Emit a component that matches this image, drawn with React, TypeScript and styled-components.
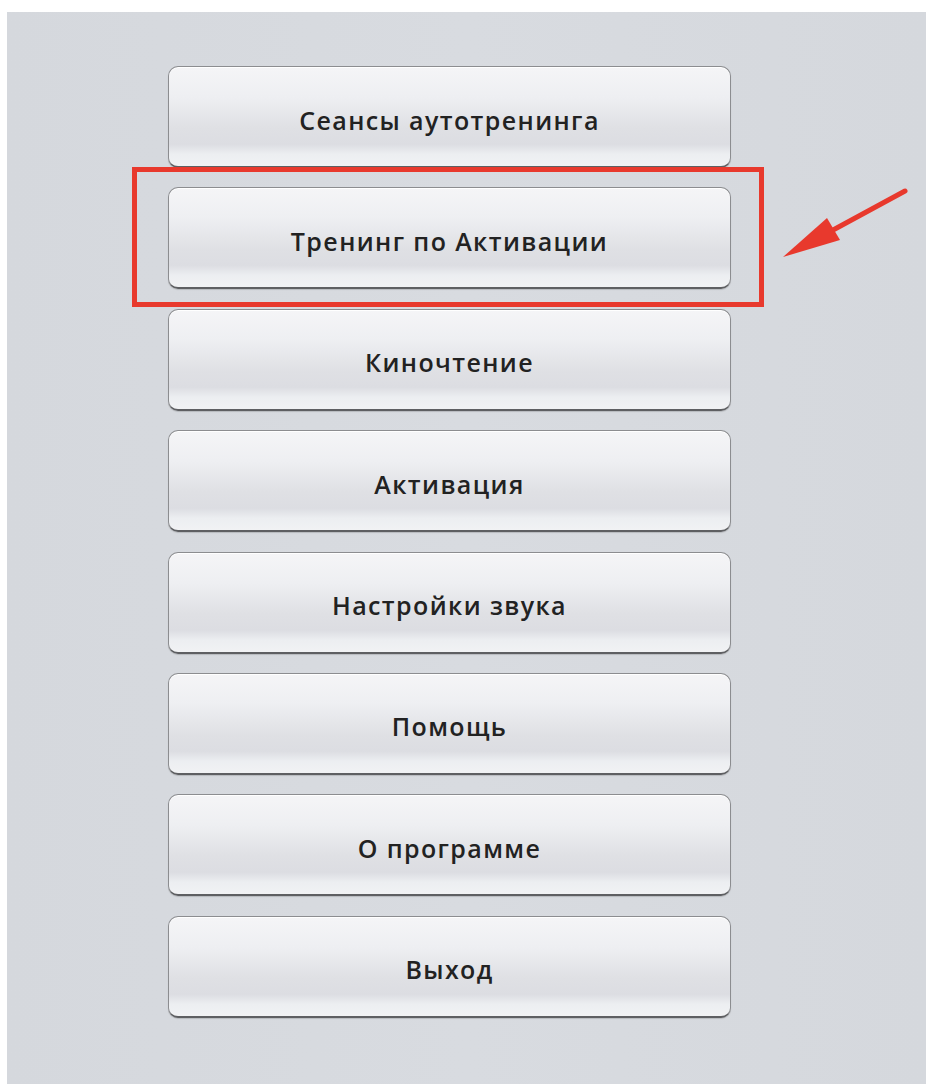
import React from 'react';
import styled, { createGlobalStyle } from 'styled-components';

const GlobalStyle = createGlobalStyle`
  html,
  body {
    margin: 0;
    padding: 0;
    background: #ffffff;
  }

  body {
    font-family: 'Open Sans', 'DejaVu Sans', sans-serif;
  }
`;

const StyledScreen = styled.main`
  position: relative;
  box-sizing: border-box;
  height: 1072px;
  margin: 12px 0 0 7px;
  padding: 54px 0 0 161px;
  background: linear-gradient(90deg, #d5d8dd 0%, #d8dbe0 50%, #d5d8dd 100%);
`;

const StyledMenu = styled.nav`
  display: flex;
  flex-direction: column;
  gap: 19.4px;
  width: 563px;
`;

const StyledItem = styled.div<{ $marked?: boolean }>`
  position: relative;

  ${({ $marked }) => $marked && `
    &::after {
      position: absolute;
      inset: -20px -33px -18px -36px;
      content: '';
      border: 5px solid #e8392d;
      pointer-events: none;
    }
  `}
`;

const StyledButton = styled.button`
  display: flex;
  align-items: center;
  justify-content: center;
  box-sizing: border-box;
  width: 100%;
  height: 102px;
  padding: 6px 0 0;
  border: 1px solid #8c8d90;
  border-bottom: 2px solid #5e5f62;
  border-radius: 10px;
  background: linear-gradient(
    180deg,
    #f5f5f7 0%,
    #eeeff2 30%,
    #dfe0e4 62%,
    #dcdde2 78%,
    #eceef1 88%,
    #f1f2f4 100%
  );
  box-shadow: inset 0 1px 0 #ffffff, 0 1px 1px rgba(0, 0, 0, 0.15);
  color: #222222;
  font-family: inherit;
  font-size: 25px;
  font-weight: 560;
  letter-spacing: 1.4px;
  cursor: pointer;
`;

const StyledArrow = styled.svg`
  position: absolute;
  top: 172px;
  left: 770px;
  width: 140px;
  height: 90px;
  overflow: visible;
`;

const items = [
  'Сеансы аутотренинга',
  'Тренинг по Активации',
  'Киночтение',
  'Активация',
  'Настройки звука',
  'Помощь',
  'О программе',
  'Выход',
];

const Arrow = () => (
  // coordinates are page-relative minus the svg offset (770, 172) and screen offset (7, 12)
  <StyledArrow viewBox="0 0 140 90">
    <path d="M128 7 L45 52" stroke="#e8392d" strokeWidth="5" strokeLinecap="round" />
    <path d="M6 73 L50 34 L63 56 Z" fill="#e8392d" />
  </StyledArrow>
);

export default function App() {
  return (
    <>
      <GlobalStyle />
      <StyledScreen>
        <StyledMenu>
          {items.map((title, index) => (
            <StyledItem key={title} $marked={index === 1}>
              <StyledButton type="button">{title}</StyledButton>
            </StyledItem>
          ))}
        </StyledMenu>
        <Arrow />
      </StyledScreen>
    </>
  );
}
